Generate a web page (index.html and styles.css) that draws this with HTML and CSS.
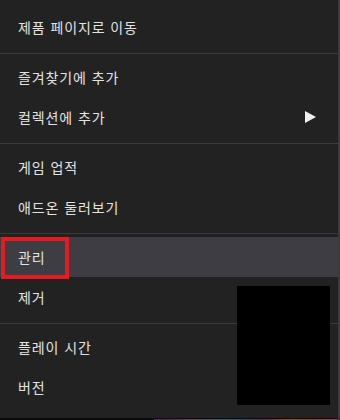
FILE: index.html
```html
<!DOCTYPE html>
<html lang="ko">
<head>
<meta charset="utf-8">
<title>메뉴</title>
<link rel="stylesheet" href="styles.css">
</head>
<body>
<div class="page">
  <div class="menu">
    <div class="item">제품 페이지로 이동</div>
    <div class="divider"></div>
    <div class="item">즐겨찾기에 추가</div>
    <div class="item has-sub">컬렉션에 추가
      <svg class="arrow" width="11" height="12" viewBox="0 0 11 12"><polygon points="0,0 11,6 0,12" fill="#f2f2f2"/></svg>
    </div>
    <div class="divider"></div>
    <div class="item">게임 업적</div>
    <div class="item">애드온 둘러보기</div>
    <div class="divider"></div>
    <div class="item active">관리</div>
    <div class="item">제거</div>
    <div class="divider"></div>
    <div class="item">플레이 시간</div>
    <div class="item">버전</div>
    <div class="highlight-box"></div>
    <div class="redact"></div>
  </div>
  <div class="bottom-strip"><div class="glow"></div></div>
</div>
</body>
</html>
```
FILE: styles.css
```css
html, body {
  margin: 0;
  padding: 0;
}
body {
  width: 340px;
  height: 420px;
  background: #3a3a3a;
  overflow: hidden;
  font-family: "Noto Sans CJK KR", "Noto Sans", sans-serif;
}
.page {
  width: 338px;
}
.menu {
  position: relative;
  width: 338px;
  height: 418px;
  box-sizing: border-box;
  padding: 7px 0 11px;
  background: #222222;
  display: flex;
  flex-direction: column;
}
.item {
  height: 40px;
  display: flex;
  align-items: center;
  justify-content: space-between;
  padding: 0 22px 0 18px;
  font-size: 14px;
  letter-spacing: 0.9px;
  color: #e2e3e4;
  flex-shrink: 0;
}
.item.active {
  background: #3d3d43;
}
.arrow {
  display: block;
}
.divider {
  height: 1px;
  margin: 6px 0 3px;
  background: #3a3a3a;
  flex-shrink: 0;
}
.highlight-box {
  position: absolute;
  left: 1px;
  top: 237px;
  width: 68px;
  height: 42px;
  box-sizing: border-box;
  border: 4px solid #e51b24;
}
.redact {
  position: absolute;
  left: 237px;
  top: 286px;
  width: 93px;
  height: 119px;
  background: #000000;
}
.bottom-strip {
  height: 2px;
  background: #0c0c0c;
  display: flex;
  flex-direction: column;
  justify-content: flex-end;
}
.glow {
  height: 1px;
  margin-left: 154px;
  background: linear-gradient(90deg, #5a2a55 0%, #6a3f5a 20%, #2d5f6e 35%, #264f73 48%, #7a2a55 62%, #a0501e 75%, #8a4525 85%, #9a3a6a 100%);
}
```
